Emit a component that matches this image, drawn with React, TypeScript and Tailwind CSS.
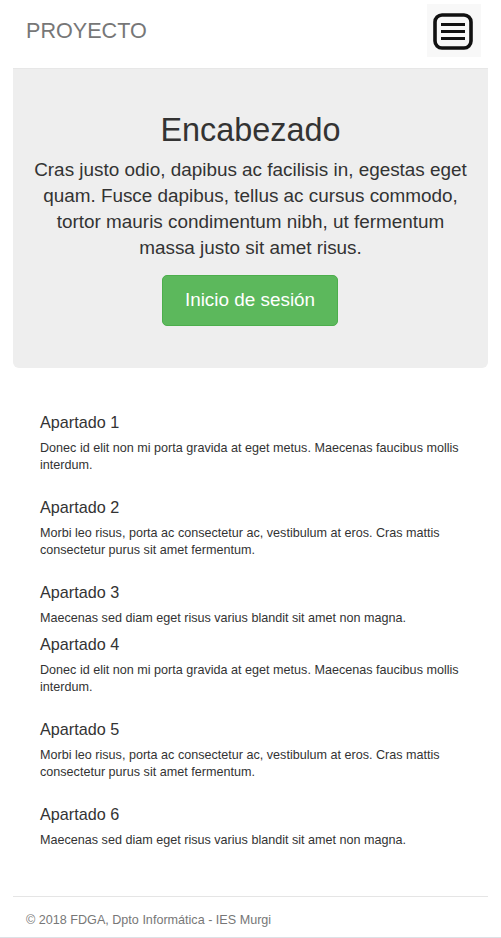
import React from 'react';

const sections = [
  { title: 'Apartado 1', text: 'Donec id elit non mi porta gravida at eget metus. Maecenas faucibus mollis interdum.', last: false },
  { title: 'Apartado 2', text: 'Morbi leo risus, porta ac consectetur ac, vestibulum at eros. Cras mattis consectetur purus sit amet fermentum.', last: false },
  { title: 'Apartado 3', text: 'Maecenas sed diam eget risus varius blandit sit amet non magna.', last: true },
  { title: 'Apartado 4', text: 'Donec id elit non mi porta gravida at eget metus. Maecenas faucibus mollis interdum.', last: false },
  { title: 'Apartado 5', text: 'Morbi leo risus, porta ac consectetur ac, vestibulum at eros. Cras mattis consectetur purus sit amet fermentum.', last: false },
  { title: 'Apartado 6', text: 'Maecenas sed diam eget risus varius blandit sit amet non magna.', last: true },
];

function MenuIcon() {
  return (
    <svg width="54" height="53" viewBox="0 0 54 53">
      <rect x="8" y="11" width="36" height="33" rx="7" fill="none" stroke="#111" strokeWidth="3.6" />
      <line x1="14" y1="20.5" x2="38" y2="20.5" stroke="#111" strokeWidth="3" />
      <line x1="14" y1="27.5" x2="38" y2="27.5" stroke="#111" strokeWidth="3" />
      <line x1="14" y1="34.5" x2="38" y2="34.5" stroke="#111" strokeWidth="3" />
    </svg>
  );
}

export default function App() {
  return (
    <div className="w-[501px] min-h-[938px] bg-white text-[#333] flex flex-col" style={{ fontFamily: '"Liberation Sans", Arial, sans-serif' }}>
      {/* Navbar */}
      <nav className="h-[69px] mx-[13px] border-b border-[#e7e7e7] flex items-start justify-between">
        <span className="mt-[18px] ml-[13px] text-[21.6px] leading-[26px] text-[#777]">PROYECTO</span>
        <button className="mt-[4px] mr-[7px] w-[54px] h-[53px] bg-[#f8f8f8] flex items-center justify-center">
          <MenuIcon />
        </button>
      </nav>

      {/* Jumbotron */}
      <div className="mx-[13px] h-[299px] bg-[#eee] rounded-b-md px-[14px] pt-[43px] text-center">
        <h1 className="text-[32.4px] leading-[36px]">Encabezado</h1>
        <p className="mt-[9px] text-[18.9px] leading-[26px]">
          Cras justo odio, dapibus ac facilisis in, egestas eget quam. Fusce dapibus, tellus ac cursus commodo, tortor mauris condimentum nibh, ut fermentum massa justo sit amet risus.
        </p>
        <button className="mt-[14px] mr-[1px] w-[176px] h-[51px] bg-[#5cb85c] border border-[#4cae4c] rounded-[5px] text-white text-[18.9px]">
          Inicio de sesión
        </button>
      </div>

      {/* Sections */}
      <div className="px-[40px] pt-[45px]">
        {sections.map((s) => (
          <div key={s.title} className={s.last ? 'mb-[8px]' : 'mb-[24px]'}>
            <h4 className="text-[16.2px] leading-[18px]">{s.title}</h4>
            <p className="mt-[9px] text-[12.6px] leading-[17px]">{s.text}</p>
          </div>
        ))}
      </div>

      {/* Footer */}
      <footer className="mt-[39px] mx-[13px] border-t border-[#e5e5e5] pt-[14px] pb-[8px]">
        <p className="ml-[13px] text-[12.6px] leading-[18px] text-[#777]">© 2018 FDGA, Dpto Informática - IES Murgi</p>
      </footer>
      <div className="mt-auto h-[2px] bg-[#dde1e6]" />
    </div>
  );
}
